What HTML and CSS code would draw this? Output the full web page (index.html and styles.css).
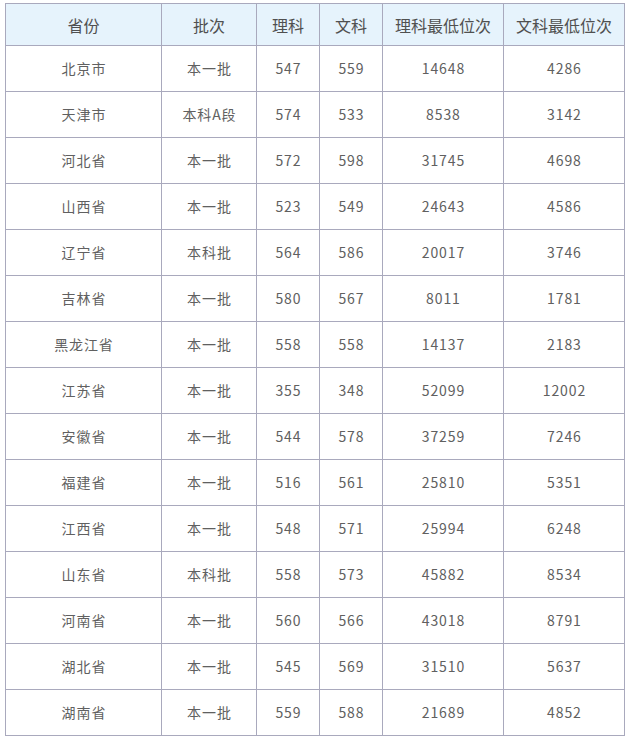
FILE: index.html
```html
<!DOCTYPE html>
<html lang="zh">
<head>
<meta charset="utf-8">
<link rel="stylesheet" href="styles.css">
</head>
<body>
<div class="wrap">
<table class="scores">
  <colgroup>
    <col class="c-prov"><col class="c-batch"><col class="c-num"><col class="c-num"><col class="c-rank"><col class="c-rank">
  </colgroup>
  <thead>
    <tr><th>省份</th><th>批次</th><th>理科</th><th>文科</th><th>理科最低位次</th><th>文科最低位次</th></tr>
  </thead>
  <tbody>
    <tr><td>北京市</td><td>本一批</td><td>547</td><td>559</td><td>14648</td><td>4286</td></tr>
    <tr><td>天津市</td><td>本科A段</td><td>574</td><td>533</td><td>8538</td><td>3142</td></tr>
    <tr><td>河北省</td><td>本一批</td><td>572</td><td>598</td><td>31745</td><td>4698</td></tr>
    <tr><td>山西省</td><td>本一批</td><td>523</td><td>549</td><td>24643</td><td>4586</td></tr>
    <tr><td>辽宁省</td><td>本科批</td><td>564</td><td>586</td><td>20017</td><td>3746</td></tr>
    <tr><td>吉林省</td><td>本一批</td><td>580</td><td>567</td><td>8011</td><td>1781</td></tr>
    <tr><td>黑龙江省</td><td>本一批</td><td>558</td><td>558</td><td>14137</td><td>2183</td></tr>
    <tr><td>江苏省</td><td>本一批</td><td>355</td><td>348</td><td>52099</td><td>12002</td></tr>
    <tr><td>安徽省</td><td>本一批</td><td>544</td><td>578</td><td>37259</td><td>7246</td></tr>
    <tr><td>福建省</td><td>本一批</td><td>516</td><td>561</td><td>25810</td><td>5351</td></tr>
    <tr><td>江西省</td><td>本一批</td><td>548</td><td>571</td><td>25994</td><td>6248</td></tr>
    <tr><td>山东省</td><td>本科批</td><td>558</td><td>573</td><td>45882</td><td>8534</td></tr>
    <tr><td>河南省</td><td>本一批</td><td>560</td><td>566</td><td>43018</td><td>8791</td></tr>
    <tr><td>湖北省</td><td>本一批</td><td>545</td><td>569</td><td>31510</td><td>5637</td></tr>
    <tr><td>湖南省</td><td>本一批</td><td>559</td><td>588</td><td>21689</td><td>4852</td></tr>
  </tbody>
</table>
</div>
</body>
</html>
```
FILE: styles.css
```css
html, body {
  margin: 0;
  padding: 0;
  background: #ffffff;
}
.wrap {
  padding: 3px 0 0 5px;
}
.scores {
  border-collapse: collapse;
  table-layout: fixed;
  width: 620px;
  font-family: "Noto Sans CJK SC", "Noto Sans", sans-serif;
  color: #5a5a5a;
}
.c-prov { width: 156px; }
.c-batch { width: 95px; }
.c-num { width: 63px; }
.c-rank { width: 121px; }
.scores th,
.scores td {
  border: 1px solid #a9a9bd;
  text-align: center;
  padding: 0;
  font-weight: normal;
}
.scores th {
  background: #e6f3fc;
  height: 41px;
  font-size: 16px;
  color: #505050;
}
.scores td {
  height: 43px;
  padding-bottom: 2px;
  font-size: 14px;
  letter-spacing: 0.9px;
  text-indent: 0.9px;
  color: #606060;
}
```
